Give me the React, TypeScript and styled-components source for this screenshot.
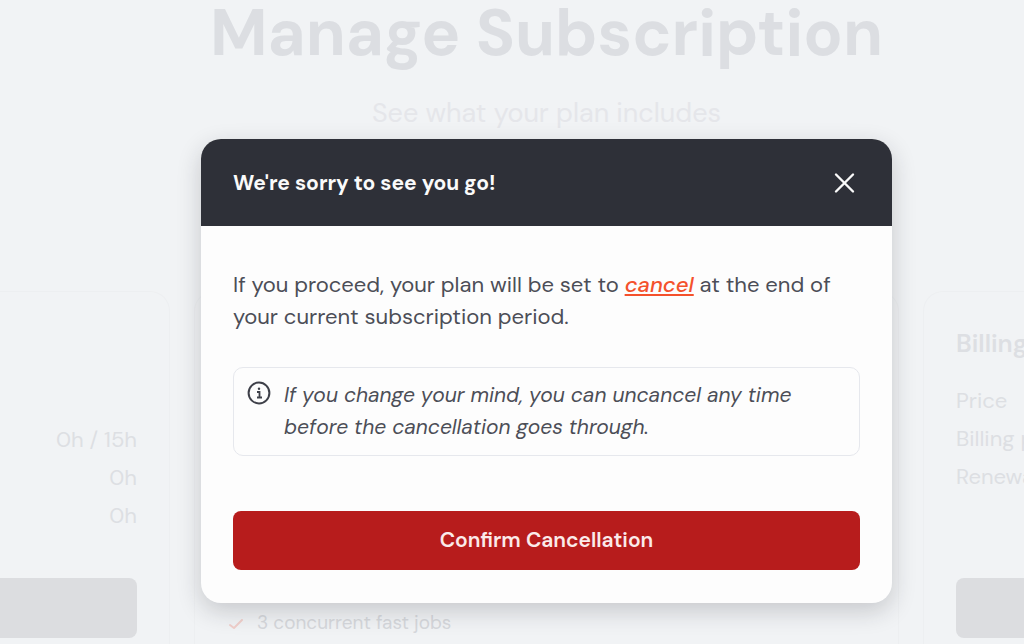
import React from "react";
import styled, { createGlobalStyle } from "styled-components";

const GlobalStyle = createGlobalStyle`
  *, *::before, *::after { box-sizing: border-box; }
  body { margin: 0; background: #f1f3f5; }
  body, button { font-family: "DM Sans", Inter, "Liberation Sans", sans-serif; }
  h1, h2, p, ul { margin: 0; padding: 0; }
`;

const Page = styled.div`
  position: relative;
  height: 100vh;
  overflow: hidden;
  background: #f1f3f5;
`;

const Columns = styled.main`
  display: grid;
  grid-template-columns: 170px minmax(0, 1fr) 101px;
  grid-template-rows: 291px auto;
  column-gap: 24px;
`;

const Intro = styled.header`
  grid-column: 2;
  text-align: center;
  white-space: nowrap;
`;

const Title = styled.h1`
  font-size: 65px;
  line-height: 66px;
  font-weight: 700;
  color: #dcdee2;
`;

const Subtitle = styled.p`
  margin-top: 31px;
  font-size: 27px;
  line-height: 32px;
  color: #e5e6ea;
`;

const Card = styled.section<{ $side: "left" | "middle" | "right" }>`
  grid-row: 2;
  min-height: 380px;
  display: flex;
  flex-direction: column;
  justify-content: flex-end;
  padding: 32px;
  border: 1px solid #edeff1;
  border-radius: 20px;
  color: #dddfe3;
  white-space: nowrap;
  ${(p) =>
    p.$side === "left" &&
    "padding-left: 0; border-left: 0; border-radius: 0 20px 20px 0; text-align: right;"}
  ${(p) =>
    p.$side === "right" &&
    "padding-right: 0; border-right: 0; border-radius: 20px 0 0 20px;"}
`;

const CardTitle = styled.h2`
  margin-bottom: 18px;
  font-size: 25px;
  line-height: 40px;
  font-weight: 600;
`;

const Rows = styled.ul`
  flex: 1;
  list-style: none;
  font-size: 22px;
  line-height: 38px;
`;

const BottomRows = styled(Rows)`
  flex: none;
  margin-bottom: 43px;
`;

const CardButton = styled.button<{ $side: "left" | "right" }>`
  height: 60px;
  border: 0;
  background: #dcdde0;
  border-radius: ${(p) => (p.$side === "left" ? "0 8px 8px 0" : "8px 0 0 8px")};
`;

const Feature = styled.p`
  display: flex;
  align-items: center;
  gap: 10px;
  font-size: 19px;
  line-height: 30px;
  color: #d6d8dc;
`;

const Overlay = styled.div`
  position: absolute;
  inset: 0;
  padding: 139px 132px 0 201px;
`;

const Modal = styled.div`
  overflow: hidden;
  border-radius: 20px;
  background: #fdfdfd;
  box-shadow: 0 8px 24px rgba(30, 32, 40, 0.2);
`;

const ModalHeader = styled.header`
  display: flex;
  align-items: center;
  justify-content: space-between;
  height: 87px;
  padding: 0 32px;
  background: #2e3038;
  color: #fafafa;
`;

const ModalTitle = styled.h2`
  font-size: 21px;
  line-height: 32px;
  font-weight: 700;
`;

const CloseButton = styled.button`
  display: flex;
  padding: 0;
  border: 0;
  background: none;
  color: inherit;
  cursor: pointer;
`;

const ModalBody = styled.div`
  padding: 43px 32px 33px;
  font-size: 22px;
  line-height: 32px;
  color: #4c4e57;
`;

const CancelWord = styled.em`
  color: #f4512c;
  font-weight: 500;
  text-decoration: underline #f4512c 2px;
  text-underline-offset: 2px;
  text-decoration-skip-ink: none;
`;

const Note = styled.div`
  display: flex;
  align-items: flex-start;
  gap: 12px;
  margin: 34px 0 55px;
  padding: 11px 12px 12px;
  border: 1px solid #e6e8ed;
  border-radius: 10px;
  font-size: 21px;
  font-style: italic;

  svg { flex: none; }
`;

const ConfirmButton = styled.button`
  display: block;
  width: 100%;
  height: 59px;
  padding: 0 0 2px;
  border: 0;
  border-radius: 8px;
  background: #b71c1c;
  color: #fbeaea;
  font-size: 21px;
  line-height: 32px;
  font-weight: 600;
  cursor: pointer;
`;

export default function App() {
  return (
    <Page>
      <GlobalStyle />
      <Columns>
        <Intro>
          <Title>Manage Subscription</Title>
          <Subtitle>See what your plan includes</Subtitle>
        </Intro>
        <Card $side="left">
          <BottomRows>
            <li>0h / 15h</li>
            <li>0h</li>
            <li>0h</li>
          </BottomRows>
          <CardButton $side="left" aria-label="Usage" />
        </Card>
        <Card $side="middle">
          <Feature>
            <svg width="20" height="20" viewBox="0 0 20 20" fill="none" stroke="#f0cfcb" strokeWidth="2" strokeLinecap="round" strokeLinejoin="round" aria-hidden="true">
              <path d="M3 12l4 3 8-8" />
            </svg>
            3 concurrent fast jobs
          </Feature>
        </Card>
        <Card $side="right">
          <CardTitle>Billing</CardTitle>
          <Rows>
            <li>Price</li>
            <li>Billing period</li>
            <li>Renewal date</li>
          </Rows>
          <CardButton $side="right" aria-label="Billing" />
        </Card>
      </Columns>
      <Overlay>
        <Modal role="dialog" aria-modal="true" aria-labelledby="cancel-title">
          <ModalHeader>
            <ModalTitle id="cancel-title">We're sorry to see you go!</ModalTitle>
            <CloseButton type="button" aria-label="Close">
              <svg width="32" height="32" viewBox="0 0 32 32" fill="none" stroke="currentColor" strokeWidth="2.4" strokeLinecap="round" aria-hidden="true">
                <path d="M8 7.5l17 17M25 7.5l-17 17" />
              </svg>
            </CloseButton>
          </ModalHeader>
          <ModalBody>
            <p>
              If you proceed, your plan will be set to <CancelWord>cancel</CancelWord> at the end of
              your current subscription period.
            </p>
            <Note>
              <svg width="26" height="26" viewBox="0 0 26 26" fill="none" stroke="#3e4049" strokeWidth="2" aria-hidden="true">
                <circle cx="13" cy="14" r="10.4" />
                <path d="M11 13h2.5v5M11 18.5h5" strokeWidth="1.8" />
                <circle cx="13" cy="9.8" r="1.2" fill="#3e4049" stroke="none" />
              </svg>
              <p>If you change your mind, you can uncancel any time before the cancellation goes through.</p>
            </Note>
            <ConfirmButton type="button">Confirm Cancellation</ConfirmButton>
          </ModalBody>
        </Modal>
      </Overlay>
    </Page>
  );
}
